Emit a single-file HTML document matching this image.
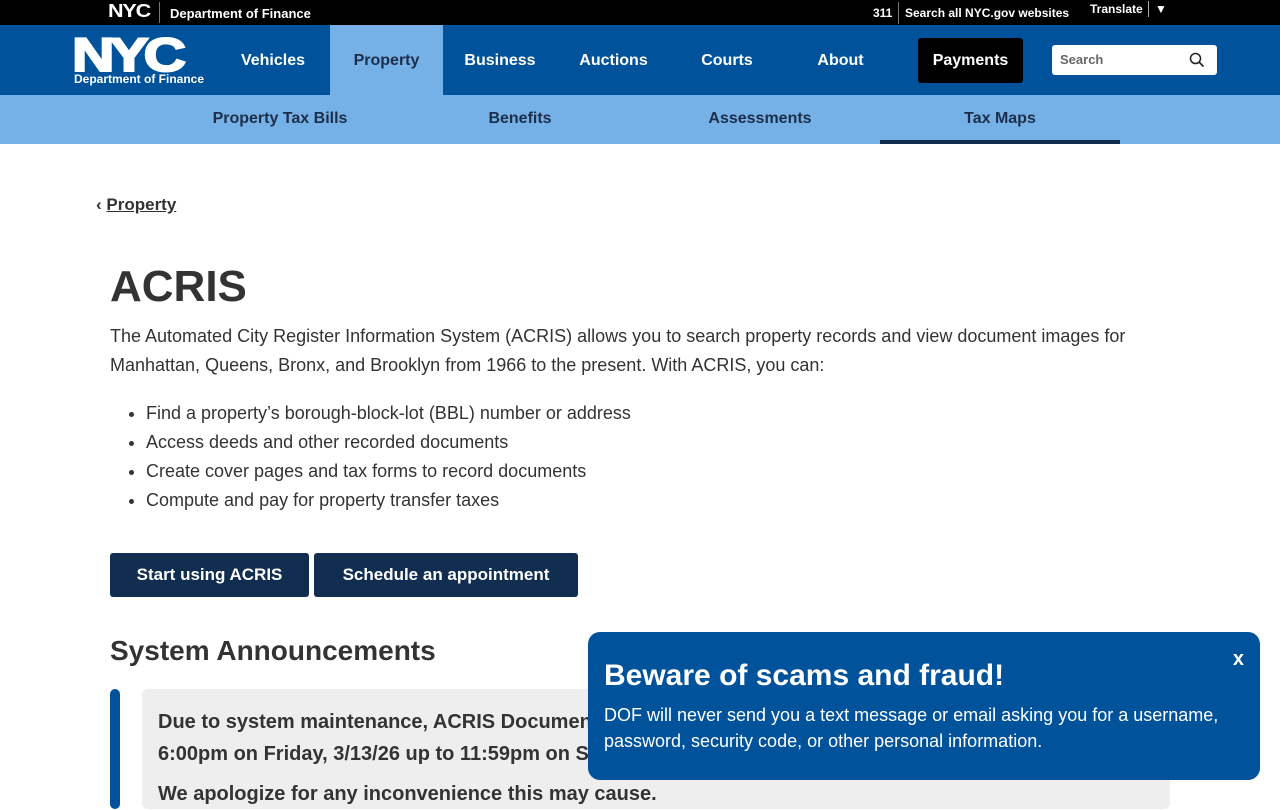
<!DOCTYPE html>
<html><head><meta charset="utf-8"><style>
*{box-sizing:border-box;margin:0;padding:0}
body{width:1280px;height:800px;overflow:hidden;font-family:"Liberation Sans",Arial,sans-serif;background:#fff;color:#333;position:relative}
.top{height:25px;background:#000;color:#fff;font-size:12px;font-weight:bold;position:relative}
.top span{position:absolute;top:6px}
.nav{height:70px;background:#00529b;position:relative;color:#fff}
.nav .it{position:absolute;top:0;height:70px;line-height:72px;font-size:16px;font-weight:bold;text-align:center}
.sub{height:49px;background:#75b1e6;position:relative}
.sub div{position:absolute;top:0;height:49px;line-height:47px;font-size:16px;font-weight:bold;color:#1c2e4a;text-align:center;width:240px}
.btn{position:absolute;top:553px;height:44px;background:#112e51;color:#fff;font-size:17px;font-weight:bold;line-height:44px;text-align:center;border-radius:3px}
p.t{position:absolute;left:110px;font-size:18px;line-height:29px;color:#333}
ul{position:absolute;left:146px;top:399px;font-size:18px;line-height:29px}
</style></head><body>
<div class="top">
<span style="left:108px;top:1px;font-size:18px;font-weight:900;letter-spacing:-1px;transform:scaleX(1.2);transform-origin:left">NYC</span>
<div style="position:absolute;left:159px;top:2px;width:1px;height:21px;background:#777"></div>
<span style="left:170px;font-size:13px">Department of Finance</span>
<span style="left:873px">311</span>
<div style="position:absolute;left:898px;top:2px;width:1px;height:22px;background:#777"></div>
<span style="left:905px">Search all NYC.gov websites</span>
<span style="left:1090px;top:2px">Translate</span>
<div style="position:absolute;left:1148px;top:1px;width:1px;height:16px;background:#aaa"></div>
<span style="left:1155px;top:2px">▼</span>
</div>
<div class="nav">
<div style="position:absolute;left:72px;top:7px;font-size:47px;font-weight:900;letter-spacing:-4px;line-height:46px;transform:scaleX(1.25);transform-origin:left;-webkit-text-stroke:2px #fff">NYC</div>
<div style="position:absolute;left:74px;top:47px;font-size:12px;font-weight:bold">Department of Finance</div>
<div class="it" style="left:216px;width:114px">Vehicles</div>
<div class="it" style="left:330px;width:113px;background:#75b1e6;color:#1c2e4a">Property</div>
<div class="it" style="left:443px;width:114px">Business</div>
<div class="it" style="left:557px;width:113px">Auctions</div>
<div class="it" style="left:670px;width:114px">Courts</div>
<div class="it" style="left:784px;width:113px">About</div>
<div style="position:absolute;left:918px;top:13px;width:105px;height:45px;background:#000;border-radius:3px;line-height:45px;text-align:center;font-weight:bold;font-size:16px">Payments</div>
<div style="position:absolute;left:1052px;top:20px;width:165px;height:30px;background:#fff;border-radius:3px;color:#666;font-size:13px;font-weight:bold;line-height:30px;padding-left:8px">Search
<svg style="position:absolute;right:12px;top:7px" width="16" height="16" viewBox="0 0 16 16"><circle cx="6.5" cy="6.5" r="5" fill="none" stroke="#222" stroke-width="1.5"/><path d="M10 10l4.5 4.5" stroke="#222" stroke-width="1.6"/></svg></div>
</div>
<div class="sub">
<div style="left:160px">Property Tax Bills</div>
<div style="left:400px">Benefits</div>
<div style="left:640px">Assessments</div>
<div style="left:880px;border-bottom:4px solid #112e51">Tax Maps</div>
</div>
<div style="position:absolute;left:96px;top:195px;font-size:17px;font-weight:bold;color:#333">‹ <span style="text-decoration:underline">Property</span></div>
<div style="position:absolute;left:110px;top:262px;font-size:44px;font-weight:bold;color:#333">ACRIS</div>
<p class="t" style="top:322px">The Automated City Register Information System (ACRIS) allows you to search property records and view document images for<br>Manhattan, Queens, Bronx, and Brooklyn from 1966 to the present. With ACRIS, you can:</p>
<ul><li>Find a property’s borough-block-lot (BBL) number or address</li><li>Access deeds and other recorded documents</li><li>Create cover pages and tax forms to record documents</li><li>Compute and pay for property transfer taxes</li></ul>
<div class="btn" style="left:110px;width:199px">Start using ACRIS</div>
<div class="btn" style="left:314px;width:264px">Schedule an appointment</div>
<div style="position:absolute;left:110px;top:635px;font-size:28px;font-weight:bold;color:#333">System Announcements</div>
<div style="position:absolute;left:110px;top:689px;width:10px;height:120px;background:#00529b;border-radius:5px"></div>
<div style="position:absolute;left:142px;top:689px;width:1028px;height:120px;background:#eee;border-radius:6px;padding:17px 16px;font-size:20px;font-weight:bold;line-height:32px;color:#333">Due to system maintenance, ACRIS Document Search will be unavailable from<br>6:00pm on Friday, 3/13/26 up to 11:59pm on Sunday, 3/15/26.<div style="margin-top:8px">We apologize for any inconvenience this may cause.</div></div>
<div style="position:absolute;left:588px;top:632px;width:672px;height:148px;background:#00529b;border-radius:12px;color:#fff;padding:26px 16px">
<div style="font-size:30px;font-weight:bold;line-height:36px">Beware of scams and fraud!</div>
<div style="font-size:18px;line-height:26px;margin-top:8px">DOF will never send you a text message or email asking you for a username,<br>password, security code, or other personal information.</div>
<div style="position:absolute;right:16px;top:16px;font-size:20px;font-weight:bold">x</div>
</div>
</body></html>
